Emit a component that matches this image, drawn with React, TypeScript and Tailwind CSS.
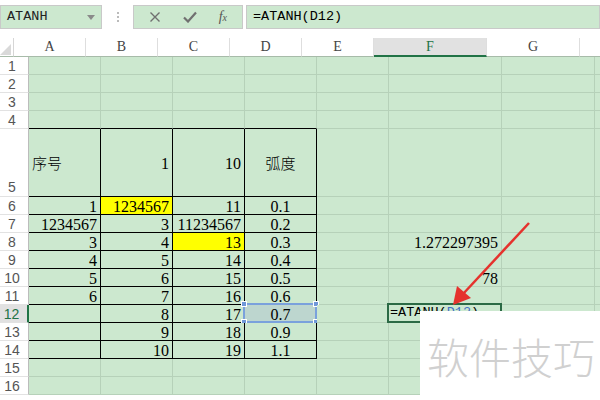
const COLS = [
  { key: 'A', w: 'w-[72px]' },
  { key: 'B', w: 'w-[72px]' },
  { key: 'C', w: 'w-[72px]' },
  { key: 'D', w: 'w-[72px]' },
  { key: 'E', w: 'w-[72px]' },
  { key: 'F', w: 'w-[113px]' },
  { key: 'G', w: 'w-[93px]' },
  { key: 'H', w: 'w-[80px]' },
]

type Cell = { text: string; align: 'l' | 'r' | 'c' }

const DATA: Record<number, Record<string, Cell>> = {
  5: {
    A: { text: '序号', align: 'l' },
    B: { text: '1', align: 'r' },
    C: { text: '10', align: 'r' },
    D: { text: '弧度', align: 'c' },
  },
  6: { A: { text: '1', align: 'r' }, B: { text: '1234567', align: 'r' }, C: { text: '11', align: 'r' }, D: { text: '0.1', align: 'c' } },
  7: { A: { text: '1234567', align: 'r' }, B: { text: '3', align: 'r' }, C: { text: '11234567', align: 'r' }, D: { text: '0.2', align: 'c' } },
  8: {
    A: { text: '3', align: 'r' },
    B: { text: '4', align: 'r' },
    C: { text: '13', align: 'r' },
    D: { text: '0.3', align: 'c' },
    F: { text: '1.272297395', align: 'r' },
  },
  9: { A: { text: '4', align: 'r' }, B: { text: '5', align: 'r' }, C: { text: '14', align: 'r' }, D: { text: '0.4', align: 'c' } },
  10: {
    A: { text: '5', align: 'r' },
    B: { text: '6', align: 'r' },
    C: { text: '15', align: 'r' },
    D: { text: '0.5', align: 'c' },
    F: { text: '78', align: 'r' },
  },
  11: { A: { text: '6', align: 'r' }, B: { text: '7', align: 'r' }, C: { text: '16', align: 'r' }, D: { text: '0.6', align: 'c' } },
  12: { B: { text: '8', align: 'r' }, C: { text: '17', align: 'r' }, D: { text: '0.7', align: 'c' } },
  13: { B: { text: '9', align: 'r' }, C: { text: '18', align: 'r' }, D: { text: '0.9', align: 'c' } },
  14: { B: { text: '10', align: 'r' }, C: { text: '19', align: 'r' }, D: { text: '1.1', align: 'c' } },
}

const ROWS = Array.from({ length: 16 }, (_, i) => i + 1)

function cellClass(r: number, c: string) {
  const tableCol = 'ABCD'.includes(c)
  const inTable = r >= 5 && r <= 14 && tableCol
  const right = inTable ? 'border-r-black' : 'border-r-[#b6d1b9]'
  const bottom = inTable || (r === 4 && tableCol) ? 'border-b-black' : 'border-b-[#b6d1b9]'
  let bg = 'bg-[#cce8cf]'
  if ((r === 6 && c === 'B') || (r === 8 && c === 'C')) bg = 'bg-[#ffff00]'
  if (r === 12 && c === 'D') bg = 'bg-[#bdd6cf]'
  return `${right} ${bottom} ${bg}`
}

function CellContent({ cell }: { cell?: Cell }) {
  if (!cell) return null
  const cjk = /[\u4e00-\u9fff]/.test(cell.text)
  const justify = cell.align === 'r' ? 'justify-end' : cell.align === 'c' ? 'justify-center' : 'justify-start'
  return (
    <div className={`flex h-full items-center px-[3px] ${justify}`}>
      <span
        className={
          cjk
            ? "font-['Noto_Sans_CJK_SC',sans-serif] text-[15px] font-light"
            : "translate-y-[1px] font-['Liberation_Serif',serif] text-[16px]"
        }
      >
        {cell.text}
      </span>
    </div>
  )
}

function Handle({ pos }: { pos: string }) {
  return <div className={`absolute h-[6px] w-[6px] bg-[#6f98d8] border border-white ${pos}`} />
}

export default function App() {
  return (
    <div className="relative h-[400px] w-[600px] overflow-hidden bg-white font-['Liberation_Mono','Noto_Sans_CJK_SC',monospace] text-[13.5px] leading-none text-black">
      {/* formula bar */}
      <div className="flex h-[24px] mt-[5px] items-stretch">
        <div className="flex w-[102px] items-center justify-between border border-[#c9c9c9] bg-[#cce8cf] pl-[6px] pr-[6px] text-[#222]">
          <span>ATANH</span>
          <svg width="8" height="5" viewBox="0 0 8 5">
            <polygon points="0,0 8,0 4,5" fill="#8a8a8a" />
          </svg>
        </div>
        <div className="flex w-[31px] flex-col items-center justify-center gap-[2px]">
          <div className="h-[2px] w-[2px] bg-[#bbbbbb]" />
          <div className="h-[2px] w-[2px] bg-[#bbbbbb]" />
          <div className="h-[2px] w-[2px] bg-[#bbbbbb]" />
        </div>
        <div className="flex w-[110px] items-center justify-around border border-[#c9c9c9] bg-[#cce8cf] px-[4px]">
          <svg width="12" height="12" viewBox="0 0 12 12">
            <path d="M1.5 1.5 L10.5 10.5 M10.5 1.5 L1.5 10.5" stroke="#707070" strokeWidth="1.4" />
          </svg>
          <svg width="14" height="12" viewBox="0 0 14 12">
            <path d="M1 6.5 L5 10.5 L13 1.5" stroke="#707070" strokeWidth="2.2" fill="none" />
          </svg>
          <span className="font-['Liberation_Serif',serif] italic text-[14px] text-[#555]">
            f<span className="text-[10px]">x</span>
          </span>
        </div>
        <div className="ml-[3px] flex flex-1 items-center border border-[#c9c9c9] bg-[#cce8cf] pl-[6px]">
          =ATANH(D12)
        </div>
      </div>

      {/* sheet */}
      <div className="mt-[9px] flex flex-col">
        <div className="flex h-[19px]">
          <div className="flex w-[29px] items-end justify-end border-r border-r-[#d6d6d6] border-b border-b-[#a7bba9] pb-[1px] pr-[2px]">
            <svg width="11" height="11" viewBox="0 0 11 11">
              <polygon points="11,0 11,11 0,11" fill="#d9d9d9" />
            </svg>
          </div>
          {COLS.map(col => {
            const active = col.key === 'F'
            return (
              <div
                key={col.key}
                className={`${col.w} flex shrink-0 items-center justify-center border-r border-r-[#dedede] font-['Liberation_Serif',serif] text-[14px] ${
                  active ? 'border-b-2 border-b-[#217346] bg-[#e1e1e1] text-[#217346]' : 'border-b border-b-[#a7bba9] text-[#444]'
                }`}
              >
                {col.key === 'H' ? '' : col.key}
              </div>
            )
          })}
        </div>

        {ROWS.map(r => (
          <div key={r} className={`flex ${r === 5 ? 'h-[68px]' : 'h-[18px]'}`}>
            <div
              className={`flex w-[29px] shrink-0 justify-center pr-[4px] font-['Liberation_Sans',sans-serif] text-[14px] ${
                r === 5 ? 'items-end pb-[2px]' : 'items-center'
              } ${
                r === 12
                  ? 'border-r-2 border-r-[#217346] bg-[#e1e1e1] text-[#217346]'
                  : 'border-r border-r-[#bcbcbc] text-[#555]'
              } border-b border-b-[#e2e2e2]`}
            >
              {r}
            </div>
            {COLS.map(col => (
              <div key={col.key} className={`${col.w} relative shrink-0 border-r border-b ${cellClass(r, col.key)}`}>
                <CellContent cell={DATA[r]?.[col.key]} />
                {r === 12 && col.key === 'D' && (
                  <div className="absolute -left-[2px] -top-[2px] -right-[1px] -bottom-[1px] border-2 border-[#7aa1dc]">
                    <Handle pos="-left-[4px] -top-[4px]" />
                    <Handle pos="-right-[4px] -top-[4px]" />
                    <Handle pos="-left-[4px] -bottom-[4px]" />
                    <Handle pos="-right-[4px] -bottom-[4px]" />
                  </div>
                )}
                {r === 12 && col.key === 'F' && (
                  <div className="absolute -left-[2px] -top-[2px] -right-[1px] -bottom-[1px] flex items-center border-2 border-[#2b6a45] pl-[1px]">
                    =ATANH(<span className="text-[#4472c4]">D12</span>)
                  </div>
                )}
              </div>
            ))}
          </div>
        ))}
      </div>

      {/* annotation arrow */}
      <svg className="pointer-events-none absolute left-0 top-0" width="600" height="400" viewBox="0 0 600 400">
        <line x1="529" y1="223" x2="463" y2="294" stroke="#e5322d" strokeWidth="2.5" />
        <polygon points="453,305 471,298 457,286" fill="#e5322d" />
      </svg>

      {/* watermark */}
      <div className="absolute left-[420px] top-[311px] right-0 bottom-0 flex items-center bg-white pl-[7px]">
        <span className="font-['Noto_Sans_CJK_SC',sans-serif] text-[42px] font-light leading-none text-[#d0d0d0]">软件技巧</span>
      </div>
    </div>
  )
}
